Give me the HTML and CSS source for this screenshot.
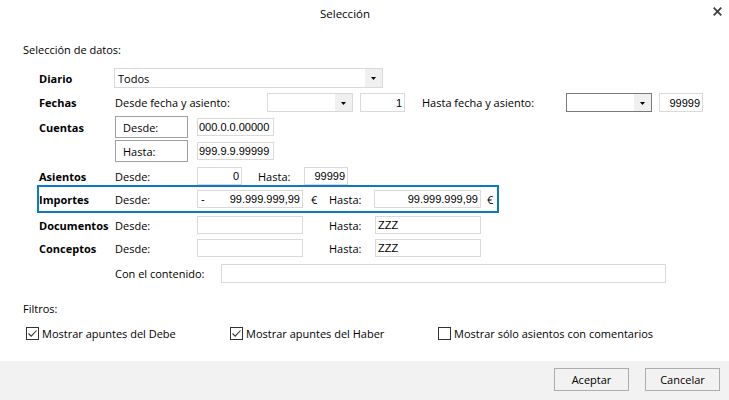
FILE: index.html
```html
<!DOCTYPE html>
<html lang="es">
<head>
<meta charset="utf-8">
<title>Selección</title>
<link rel="stylesheet" href="styles.css">
</head>
<body>
<div class="dialog">
  <header class="titlebar">
    <span class="title">Selección</span>
    <span class="close-cell">
      <svg class="close-icon" width="9" height="9" viewBox="0 0 9 9"><path d="M0.7 0.7 L8.3 8.3 M8.3 0.7 L0.7 8.3" stroke="#404040" stroke-width="1.8" fill="none"/></svg>
    </span>
  </header>

  <main class="content">
    <div class="section-label">Selección de datos:</div>

    <div class="form">
      <div class="row row-diario">
        <span class="lbl">Diario</span>
        <div class="combo combo-diario">
          <span class="combo-text">Todos</span>
          <span class="drop"><svg width="5" height="3" viewBox="0 0 5 3"><path d="M0 0 H5 L2.5 3 Z" fill="#000"/></svg></span>
        </div>
      </div>

      <div class="row row-fechas">
        <span class="lbl">Fechas</span>
        <span class="sub sub-wide">Desde fecha y asiento:</span>
        <div class="combo combo-date">
          <span class="combo-text"></span>
          <span class="drop"><svg width="5" height="3" viewBox="0 0 5 3"><path d="M0 0 H5 L2.5 3 Z" fill="#000"/></svg></span>
        </div>
        <span class="field num w45 gap7">1</span>
        <span class="sub sub-hasta-fecha">Hasta fecha y asiento:</span>
        <div class="combo combo-date combo-dark">
          <span class="combo-text"></span>
          <span class="drop"><svg width="5" height="3" viewBox="0 0 5 3"><path d="M0 0 H5 L2.5 3 Z" fill="#000"/></svg></span>
        </div>
        <span class="field num w44 gap7">99999</span>
      </div>

      <div class="row row-cuentas1">
        <span class="lbl">Cuentas</span>
        <span class="boxlbl">Desde:</span>
        <span class="field code">000.0.0.00000</span>
      </div>

      <div class="row row-cuentas2">
        <span class="lbl"></span>
        <span class="boxlbl">Hasta:</span>
        <span class="field code">999.9.9.99999</span>
      </div>

      <div class="row row-asientos">
        <span class="lbl">Asientos</span>
        <span class="sub">Desde:</span>
        <span class="field num w45">0</span>
        <span class="sub sub-hasta-asiento">Hasta:</span>
        <span class="field num w44">99999</span>
      </div>

      <div class="row row-importes">
        <span class="lbl">Importes</span>
        <span class="sub">Desde:</span>
        <span class="field amount w106"><span>-</span><span>99.999.999,99</span></span>
        <span class="euro">€</span>
        <span class="sub sub-hasta-imp">Hasta:</span>
        <span class="field amount w107"><span></span><span>99.999.999,99</span></span>
        <span class="euro euro2">€</span>
      </div>

      <div class="row row-docs">
        <span class="lbl">Documentos</span>
        <span class="sub">Desde:</span>
        <span class="field w106"></span>
        <span class="sub sub-hasta-doc">Hasta:</span>
        <span class="field text w106">ZZZ</span>
      </div>

      <div class="row row-conceptos">
        <span class="lbl">Conceptos</span>
        <span class="sub">Desde:</span>
        <span class="field w106"></span>
        <span class="sub sub-hasta-doc">Hasta:</span>
        <span class="field text w106">ZZZ</span>
      </div>

      <div class="row row-contenido">
        <span class="lbl"></span>
        <span class="sub sub-contenido">Con el contenido:</span>
        <span class="field w445"></span>
      </div>
    </div>

    <div class="section-label filtros">Filtros:</div>

    <div class="checks">
      <label class="check check-1">
        <span class="box"><svg width="11" height="11" viewBox="0 0 11 11"><path d="M1.5 5.5 L4.2 8.2 L9.5 2.5" stroke="#333" stroke-width="1.1" fill="none"/></svg></span>
        <span class="check-text">Mostrar apuntes del Debe</span>
      </label>
      <label class="check check-2">
        <span class="box"><svg width="11" height="11" viewBox="0 0 11 11"><path d="M1.5 5.5 L4.2 8.2 L9.5 2.5" stroke="#333" stroke-width="1.1" fill="none"/></svg></span>
        <span class="check-text">Mostrar apuntes del Haber</span>
      </label>
      <label class="check">
        <span class="box"></span>
        <span class="check-text">Mostrar sólo asientos con comentarios</span>
      </label>
    </div>
  </main>

  <footer class="footer">
    <button class="btn">Aceptar</button>
    <button class="btn">Cancelar</button>
  </footer>
</div>
</body>
</html>
```

FILE: styles.css
```css
* { box-sizing: border-box; }
html, body { margin: 0; padding: 0; }
body {
  width: 729px;
  height: 400px;
  overflow: hidden;
  background: #fff;
  color: #000;
  font-family: "Open Sans", "Noto Sans", sans-serif;
  font-size: 11px;
}
.dialog { display: flex; flex-direction: column; height: 400px; }

.titlebar {
  height: 28px;
  display: grid;
  grid-template-columns: 1fr 39px;
  align-items: center;
}
.title { text-align: center; font-size: 11.5px; line-height: 16px; }
.close-cell { display: flex; justify-content: flex-end; padding-right: 7px; padding-bottom: 6px; }
.close-icon { display: block; }

.content { flex: 1; display: flex; flex-direction: column; }
.section-label { margin-top: 14px; margin-left: 23px; line-height: 16px; height: 16px; }
.filtros { margin-top: 18px; }

.form { padding-left: 39px; display: flex; flex-direction: column; }
.row { display: flex; align-items: center; white-space: nowrap; }
.lbl { width: 76px; flex: none; font-weight: 700; }
.sub { width: 82px; flex: none; }
.sub-wide { width: 152px; }
.sub-hasta-fecha { width: 144px; margin-left: 17px; }
.sub-hasta-asiento { width: 46px; margin-left: 16px; }
.sub-hasta-imp { width: 45px; margin-left: 0; }
.sub-hasta-doc { width: 46px; margin-left: 26px; }
.sub-contenido { width: 106px; }

.row-diario { margin-top: 10px; height: 20px; }
.row-fechas { margin-top: 5px; height: 19px; }
.row-cuentas1 { margin-top: 4px; height: 22px; }
.row-cuentas2 { margin-top: 2px; height: 22px; }
.row-asientos { margin-top: 5px; height: 18px; }
.row-importes {
  margin-left: -2px;
  width: 462px;
  height: 28px;
  border: 2px solid #0a7ac4;
}
.row-docs { margin-top: 3px; height: 18px; }
.row-conceptos { margin-top: 5px; height: 18px; }
.row-contenido { margin-top: 7px; height: 19px; }

.combo {
  display: flex;
  align-items: stretch;
  border: 1px solid #d9d9d9;
  background: #fff;
  height: 100%;
  flex: none;
}
.combo-diario { width: 269px; margin-left: -1px; }
.combo-date { width: 86px; }
.combo-dark { border-color: #7a7a7a; }
.combo-text { flex: 1; padding-left: 3px; display: flex; align-items: center; }
.drop {
  width: 17px;
  background: #f0f0f0;
  display: flex;
  align-items: center;
  justify-content: center;
}
.drop svg { display: block; margin-top: 1px; }

.field {
  flex: none;
  height: 18px;
  border: 1px solid #d9d9d9;
  background: #fff;
  font-family: "Liberation Sans", Arial, sans-serif;
  font-size: 11px;
  display: flex;
  align-items: center;
  padding: 0 2px 0 1px;
}
.row-fechas .field { height: 19px; }
.row-contenido .field { height: 19px; }
.num { justify-content: flex-end; }
.amount { justify-content: space-between; padding-left: 3px; }
.w44 { width: 44px; }
.w45 { width: 45px; }
.w106 { width: 106px; }
.w107 { width: 107px; }
.w445 { width: 445px; }
.gap7 { margin-left: 7px; }
.code { width: 77px; margin-left: 9px; }
.text { padding-left: 2px; }

.boxlbl {
  flex: none;
  width: 73px;
  height: 22px;
  border: 1px solid #a0a0a0;
  padding-left: 7px;
  display: flex;
  align-items: center;
}

.euro { width: 18px; margin-left: 8px; flex: none; }
.euro2 { margin-left: 6px; }

.checks { margin-top: 8px; padding-left: 26px; display: flex; height: 16px; align-items: center; }
.check { display: flex; align-items: center; flex: none; }
.check-1 { width: 204px; }
.check-2 { width: 208px; }
.box {
  width: 13px;
  height: 13px;
  border: 1px solid #333;
  background: #fff;
  display: flex;
  align-items: center;
  justify-content: center;
  margin-right: 3px;
}
.box svg { display: block; }

.footer {
  height: 39px;
  background: #f2f2f2;
  display: flex;
  justify-content: flex-end;
  align-items: flex-start;
  gap: 16px;
  padding: 7px 9px 0 0;
}
.btn {
  width: 75px;
  height: 23px;
  border: 1px solid #adadad;
  background: #f2f2f2;
  font-family: "Open Sans", "Noto Sans", sans-serif;
  font-size: 11px;
  color: #000;
  padding: 0;
}
```
